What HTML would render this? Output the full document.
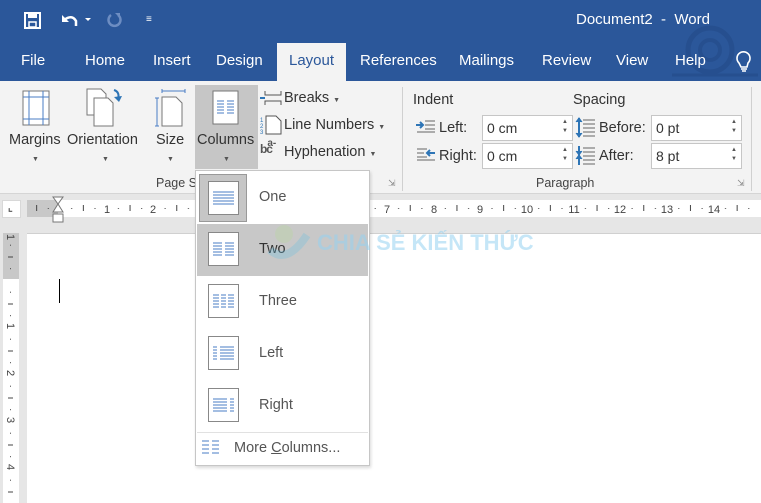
<!DOCTYPE html>
<html style="width:761px;height:503px;overflow:hidden"><head><meta charset="utf-8"><style>
*{margin:0;padding:0;box-sizing:border-box}
body{width:761px;height:503px;overflow:hidden;position:relative;background:#e6e6e6;font-family:"Segoe UI","Liberation Sans",sans-serif;color:#333}
.a{position:absolute;white-space:nowrap}
.tab{color:#fff;font-size:15px;top:52px}
.lbl{font-size:14.5px;color:#333}
.grp{font-size:12.5px;color:#444}
.box{position:absolute;background:#fff;border:1px solid #c6c6c6;height:26px;font-size:14px;padding:4px 0 0 4px;color:#333}
.spin{position:absolute;right:4px;font-size:6px;color:#555;line-height:9px}
.dd{font-size:7px;color:#555}
.ic{position:absolute;width:31px;height:34px;border:1px solid #888;background:#fff}
.it{font-size:14.5px;color:#555}
</style></head><body>
<!-- title bar -->
<div class="a" style="left:0;top:0;width:761px;height:81px;background:#2b579a"></div>
<svg class="a" style="left:24px;top:12px" width="18" height="18"><rect x="1" y="1" width="15" height="15" fill="none" stroke="#fff" stroke-width="2"/><rect x="4" y="1" width="9" height="5" fill="#fff"/><rect x="5" y="10" width="7" height="5" fill="#2b579a" stroke="#fff" stroke-width="1.5"/></svg>
<svg class="a" style="left:60px;top:12px" width="36" height="18"><path d="M4 8 Q12 2 16 9 L16 14" fill="none" stroke="#fff" stroke-width="2.5"/><path d="M2 3 L2 10 L9 10 Z" fill="#fff"/><path d="M25 6 L31 6 L28 9Z" fill="#fff"/></svg>
<svg class="a" style="left:106px;top:11px" width="18" height="18"><path d="M5 4 A6 6 0 1 0 12 4" fill="none" stroke="#6d8dc2" stroke-width="2.5"/><path d="M9 2 L14 2 L14 7Z" fill="#6d8dc2"/></svg>
<div class="a" style="left:146px;top:14px;color:#fff;font-size:10px">&#8801;</div>
<div class="a" style="left:576px;top:11px;color:#fff;font-size:15px">Document2&nbsp; - &nbsp;Word</div>
<svg class="a" style="left:670px;top:20px" width="91" height="61" opacity="0.25"><circle cx="40" cy="30" r="22" fill="none" stroke="#1a3a70" stroke-width="5"/><circle cx="40" cy="30" r="10" fill="none" stroke="#1a3a70" stroke-width="4"/><path d="M2 55 L88 55" stroke="#1a3a70" stroke-width="3"/></svg>
<div class="a tab" style="left:21px">File</div>
<div class="a tab" style="left:85px">Home</div>
<div class="a tab" style="left:153px">Insert</div>
<div class="a tab" style="left:216px">Design</div>
<div class="a" style="left:277px;top:43px;width:69px;height:38px;background:#f3f3f3"></div>
<div class="a tab" style="left:289px;color:#2b579a">Layout</div>
<div class="a tab" style="left:360px">References</div>
<div class="a tab" style="left:459px">Mailings</div>
<div class="a tab" style="left:542px">Review</div>
<div class="a tab" style="left:616px">View</div>
<div class="a tab" style="left:675px">Help</div>
<svg class="a" style="left:735px;top:50px" width="18" height="24"><path d="M4 13 A6.5 6.5 0 1 1 13 13 L12 17 L6 17 Z" fill="none" stroke="#fff" stroke-width="1.6"/><path d="M6 19 L12 19 M7 21 L11 21" stroke="#fff" stroke-width="1.5"/></svg>
<!-- ribbon -->
<div class="a" style="left:0;top:81px;width:761px;height:113px;background:#f3f3f3;border-bottom:1px solid #d5d5d5"></div>
<svg class="a" style="left:22px;top:90px" width="30" height="38"><rect x="1" y="1" width="26" height="34" fill="#fff" stroke="#777"/><path d="M7 1V35M21 1V35M1 7H27M1 29H27" stroke="#4a7dc4"/></svg>
<svg class="a" style="left:86px;top:88px" width="40" height="40"><path d="M1 1H15L20 6V27H1Z" fill="#fff" stroke="#777"/><path d="M8 10H22L27 15V38H8Z" fill="#fff" stroke="#777"/><path d="M28 2 Q34 4 32 11" fill="none" stroke="#2e75b6" stroke-width="2"/><path d="M28 9L33 14L36 8Z" fill="#2e75b6"/></svg>
<svg class="a" style="left:154px;top:89px" width="34" height="40"><path d="M8 2H31M8 0V4M31 0V4" stroke="#4a7dc4"/><path d="M3 9V37M1 9H5M1 37H5" stroke="#4a7dc4"/><path d="M8 8H22L28 14V37H8Z" fill="#fff" stroke="#777"/></svg>
<div class="a" style="left:195px;top:85px;width:63px;height:84px;background:#c6c6c6"></div>
<svg class="a" style="left:212px;top:90px" width="28" height="36"><rect x="1" y="1" width="25" height="33" fill="#fff" stroke="#777"/><path d="M5 11H12M15 11H22M5 14H12M15 14H22M5 17H12M15 17H22M5 20H12M15 20H22M5 23H12M15 23H22" stroke="#4a7dc4"/></svg>
<div class="a lbl" style="left:9px;top:132px">Margins</div>
<div class="a lbl" style="left:67px;top:132px">Orientation</div>
<div class="a lbl" style="left:156px;top:132px">Size</div>
<div class="a lbl" style="left:197px;top:132px">Columns</div>
<div class="a dd" style="left:32px;top:156px">&#9660;</div>
<div class="a dd" style="left:102px;top:156px">&#9660;</div>
<div class="a dd" style="left:167px;top:156px">&#9660;</div>
<div class="a dd" style="left:223px;top:156px">&#9660;</div>
<svg class="a" style="left:260px;top:89px" width="22" height="18"><path d="M5 2V6H21V2M5 16V12H21V16" fill="none" stroke="#555"/><path d="M0 9H5" stroke="#2e75b6" stroke-width="2"/></svg>
<div class="a lbl" style="left:284px;top:90px">Breaks <span class="dd">&#9660;</span></div>
<svg class="a" style="left:260px;top:115px" width="22" height="20"><text x="0" y="7" font-size="6" fill="#2e75b6" font-family="Liberation Sans">1</text><text x="0" y="13" font-size="6" fill="#2e75b6" font-family="Liberation Sans">2</text><text x="0" y="19" font-size="6" fill="#2e75b6" font-family="Liberation Sans">3</text><path d="M6 1H16L21 6V19H6Z" fill="#fff" stroke="#555"/></svg>
<div class="a lbl" style="left:284px;top:117px">Line Numbers <span class="dd">&#9660;</span></div>
<div class="a" style="left:260px;top:142px;font-size:12px;color:#555;font-weight:bold">b<span style="font-size:10px;position:relative;top:-7px">a-</span><span style="position:relative;left:-10px">c</span></div>
<div class="a lbl" style="left:284px;top:144px">Hyphenation <span class="dd">&#9660;</span></div>
<div class="a grp" style="left:156px;top:176px">Page S</div>
<div class="a" style="left:388px;top:178px;font-size:9px;color:#888">&#8690;</div>
<div class="a" style="left:402px;top:87px;width:1px;height:104px;background:#d0d0d0"></div>
<div class="a" style="left:751px;top:87px;width:1px;height:104px;background:#d0d0d0"></div>
<div class="a lbl" style="left:413px;top:92px">Indent</div>
<div class="a lbl" style="left:573px;top:92px">Spacing</div>
<svg class="a" style="left:416px;top:119px" width="20" height="14"><path d="M9 2H19M9 6H19M9 10H19M1 13H19" stroke="#666"/><path d="M0 6H6M4 3L7 6L4 9" stroke="#2e75b6" stroke-width="2" fill="none"/></svg>
<div class="a lbl" style="left:439px;top:120px">Left:</div>
<svg class="a" style="left:416px;top:147px" width="20" height="14"><path d="M1 2H11M1 6H8M1 10H11M1 13H19" stroke="#666"/><path d="M19 6H12M14 3L11 6L14 9" stroke="#2e75b6" stroke-width="2" fill="none"/></svg>
<div class="a lbl" style="left:439px;top:148px">Right:</div>
<div class="box" style="left:482px;top:115px;width:91px">0 cm<div class="spin" style="top:2px">&#9650;<br>&#9660;</div></div>
<div class="box" style="left:482px;top:143px;width:91px">0 cm<div class="spin" style="top:2px">&#9650;<br>&#9660;</div></div>
<svg class="a" style="left:575px;top:117px" width="22" height="22"><path d="M8 3H20M8 7H20M8 11H20M8 15H20M8 19H20" stroke="#666"/><path d="M4 1V20" stroke="#2e75b6" stroke-width="2"/><path d="M1 5L4 1L7 5M1 16L4 20L7 16" fill="#2e75b6" stroke="#2e75b6"/></svg>
<div class="a lbl" style="left:599px;top:120px">Before:</div>
<svg class="a" style="left:575px;top:145px" width="22" height="22"><path d="M8 3H20M8 7H20M8 11H20M8 15H20M8 19H20" stroke="#666"/><path d="M4 1V20" stroke="#2e75b6" stroke-width="2"/><path d="M1 6L4 10L7 6M1 14L4 10L7 14" fill="#2e75b6" stroke="#2e75b6"/></svg>
<div class="a lbl" style="left:599px;top:148px">After:</div>
<div class="box" style="left:651px;top:115px;width:91px">0 pt<div class="spin" style="top:2px">&#9650;<br>&#9660;</div></div>
<div class="box" style="left:651px;top:143px;width:91px">8 pt<div class="spin" style="top:2px">&#9650;<br>&#9660;</div></div>
<div class="grp a" style="left:536px;top:176px">Paragraph</div>
<div class="a" style="left:737px;top:178px;font-size:9px;color:#888">&#8690;</div>
<!-- horizontal ruler -->
<div class="a" style="left:2px;top:200px;width:19px;height:18px;background:#fff;border:1px solid #d8d8d8;font-size:10px;font-weight:bold;color:#555;padding:2px 0 0 5px">&#8990;</div>
<svg class="a" style="left:0;top:200px" width="761" height="17" font-family="Liberation Sans" font-size="11" fill="#444" text-anchor="middle">
<defs><pattern id="hp" x="13.3" y="0" width="46.7" height="17" patternUnits="userSpaceOnUse"><rect x="11.2" y="8" width="1" height="1" fill="#444"/><rect x="22.85" y="5" width="1" height="6" fill="#444"/><rect x="34.5" y="8" width="1" height="1" fill="#444"/></pattern></defs>
<rect x="27" y="0" width="734" height="17" fill="#fff"/>
<rect x="27" y="0" width="31" height="17" fill="#c8c8c8"/>
<rect x="27" y="0" width="734" height="17" fill="url(#hp)"/>
<g>
<rect x="101" y="2" width="12" height="13" fill="#fff"/><text x="107" y="13">1</text>
<rect x="147" y="2" width="12" height="13" fill="#fff"/><text x="153" y="13">2</text>
<rect x="381" y="2" width="12" height="13" fill="#fff"/><text x="387" y="13">7</text>
<rect x="428" y="2" width="12" height="13" fill="#fff"/><text x="434" y="13">8</text>
<rect x="474" y="2" width="12" height="13" fill="#fff"/><text x="480" y="13">9</text>
<rect x="518" y="2" width="18" height="13" fill="#fff"/><text x="527" y="13">10</text>
<rect x="565" y="2" width="18" height="13" fill="#fff"/><text x="574" y="13">11</text>
<rect x="611" y="2" width="18" height="13" fill="#fff"/><text x="620" y="13">12</text>
<rect x="658" y="2" width="18" height="13" fill="#fff"/><text x="667" y="13">13</text>
<rect x="705" y="2" width="18" height="13" fill="#fff"/><text x="714" y="13">14</text>
</g>
</svg>
<svg class="a" style="left:52px;top:196px" width="13" height="30"><path d="M1 1H11L6 8Z M6 8L1 16H11Z" fill="#fff" stroke="#777"/><rect x="1" y="18" width="10" height="8" fill="#fff" stroke="#777"/></svg>
<!-- vertical ruler -->
<svg class="a" style="left:0;top:233px" width="22" height="270" font-family="Liberation Sans" font-size="11" fill="#444" text-anchor="middle">
<defs><pattern id="vp" x="0" y="0" width="22" height="47" patternUnits="userSpaceOnUse"><rect x="10" y="11.7" width="1" height="1" fill="#444"/><rect x="8" y="23.5" width="5" height="1" fill="#444"/><rect x="10" y="35.2" width="1" height="1" fill="#444"/></pattern></defs>
<rect x="3" y="0" width="16" height="270" fill="#fff"/>
<rect x="3" y="0" width="16" height="46" fill="#c8c8c8"/>
<rect x="3" y="0" width="16" height="270" fill="url(#vp)" transform="translate(0,0)"/>
<text x="11" y="8" transform="rotate(90 11 4)">1</text>
<rect x="4" y="86" width="14" height="12" fill="#fff"/><text x="11" y="97" transform="rotate(90 11 93)">1</text>
<rect x="4" y="133" width="14" height="12" fill="#fff"/><text x="11" y="144" transform="rotate(90 11 140)">2</text>
<rect x="4" y="180" width="14" height="12" fill="#fff"/><text x="11" y="191" transform="rotate(90 11 187)">3</text>
<rect x="4" y="227" width="14" height="12" fill="#fff"/><text x="11" y="238" transform="rotate(90 11 234)">4</text>
</svg>
<div class="a" style="left:27px;top:233px;width:734px;height:270px;background:#fff;border-top:1px solid #d0d0d0"></div>
<div class="a" style="left:59px;top:279px;width:1px;height:24px;background:#000"></div>
<!-- dropdown -->
<div class="a" style="left:195px;top:170px;width:175px;height:296px;background:#fff;border:1px solid #c6c6c6;box-shadow:1px 2px 3px rgba(0,0,0,.15)"></div>
<div class="a" style="left:199px;top:174px;width:48px;height:48px;background:#c6c6c6;border:1px solid #999"></div>
<div class="a" style="left:197px;top:224px;width:171px;height:52px;background:#c8c8c8"></div>
<div class="ic" style="left:208px;top:181px"><svg width="29" height="32"><path d="M4 10H25M4 13H25M4 16H25M4 19H25M4 22H25" stroke="#4a7dc4"/></svg></div>
<div class="ic" style="left:208px;top:232px"><svg width="29" height="32"><path d="M4 10H13M16 10H25M4 13H13M16 13H25M4 16H13M16 16H25M4 19H13M16 19H25M4 22H13M16 22H25" stroke="#4a7dc4"/></svg></div>
<div class="ic" style="left:208px;top:284px"><svg width="29" height="32"><path d="M4 10H10M12 10H17M19 10H25M4 13H10M12 13H17M19 13H25M4 16H10M12 16H17M19 16H25M4 19H10M12 19H17M19 19H25M4 22H10M12 22H17M19 22H25" stroke="#4a7dc4"/></svg></div>
<div class="ic" style="left:208px;top:336px"><svg width="29" height="32"><path d="M4 10H8M11 10H25M4 13H8M11 13H25M4 16H8M11 16H25M4 19H8M11 19H25M4 22H8M11 22H25" stroke="#4a7dc4"/></svg></div>
<div class="ic" style="left:208px;top:388px"><svg width="29" height="32"><path d="M4 10H18M21 10H25M4 13H18M21 13H25M4 16H18M21 16H25M4 19H18M21 19H25M4 22H18M21 22H25" stroke="#4a7dc4"/></svg></div>
<div class="a it" style="left:259px;top:189px">One</div>
<div class="a it" style="left:259px;top:241px;color:#333">Two</div>
<div class="a it" style="left:259px;top:293px">Three</div>
<div class="a it" style="left:259px;top:345px">Left</div>
<div class="a it" style="left:259px;top:397px">Right</div>
<div class="a" style="left:197px;top:432px;width:171px;height:1px;background:#e1e1e1"></div>
<svg class="a" style="left:201px;top:440px" width="20" height="14"><path d="M1 1H8M11 1H18M1 5H8M11 5H18M1 9H8M11 9H18M1 13H8M11 13H18" stroke="#4a7dc4"/></svg>
<div class="a it" style="left:234px;top:440px">More <u>C</u>olumns...</div>
<!-- watermark -->
<svg class="a" style="left:262px;top:220px;opacity:0.3" width="50" height="55"><circle cx="22" cy="14" r="9" fill="#b5d99a"/><path d="M8 30 Q25 45 45 15" fill="none" stroke="#6bbfe0" stroke-width="8"/></svg>
<div class="a" style="left:317px;top:230px;font-size:22px;font-weight:bold;color:rgba(150,210,240,0.55);font-family:'Liberation Sans',sans-serif">CHIA SẺ KIẾN THỨC</div>
</body></html>
